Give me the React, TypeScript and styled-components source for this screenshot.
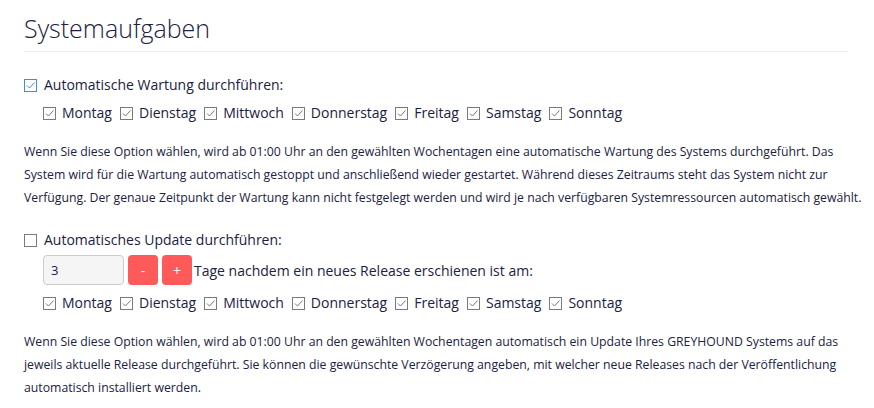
import React, {useState} from 'react'
import styled, {createGlobalStyle} from 'styled-components'

const days = ['Montag', 'Dienstag', 'Mittwoch', 'Donnerstag', 'Freitag', 'Samstag', 'Sonntag']

const Check = ({on, accent}: {on: boolean, accent?: boolean}) => (
    <Box $accent={accent}>
        {on ? (
            <svg width="11" height="11" viewBox="0 0 11 11">
                <path d="M2 5.5 L4.5 8 L9.5 2.5" fill="none" stroke={accent ? '#3d8fdc' : '#777'} strokeWidth="1" />
            </svg>
        ) : null}
    </Box>
)

const DayRow = () => (
    <Days>
        {days.map((d) => (
            <Day key={d}>
                <Check on={true} />
                <span>{d}</span>
            </Day>
        ))}
    </Days>
)

const App = () => {
    const [delay, setDelay] = useState<number>(3)

    return (
        <Container>
            <GlobalStyle />
            <Title>Systemaufgaben</Title>

            <Option $top={23}>
                <Check on={true} accent />
                <span>Automatische Wartung durchführen:</span>
            </Option>
            <DayRow />
            <Text>
                Wenn Sie diese Option wählen, wird ab 01:00 Uhr an den gewählten Wochentagen eine automatische Wartung des Systems durchgeführt. Das System wird für die Wartung automatisch gestoppt und anschließend wieder gestartet. Während dieses Zeitraums steht das System nicht zur Verfügung. Der genaue Zeitpunkt der Wartung kann nicht festgelegt werden und wird je nach verfügbaren Systemressourcen automatisch gewählt.
            </Text>

            <Option $top={21}>
                <Check on={false} />
                <span>Automatisches Update durchführen:</span>
            </Option>
            <Delay>
                <Input value={delay} readOnly />
                <Step onClick={() => setDelay(Math.max(0, delay - 1))}>-</Step>
                <Step onClick={() => setDelay(delay + 1)}>+</Step>
                <span>Tage nachdem ein neues Release erschienen ist am:</span>
            </Delay>
            <DayRow />
            <Text>
                Wenn Sie diese Option wählen, wird ab 01:00 Uhr an den gewählten Wochentagen automatisch ein Update Ihres GREYHOUND Systems auf das jeweils aktuelle Release durchgeführt. Sie können die gewünschte Verzögerung angeben, mit welcher neue Releases nach der Veröffentlichung automatisch installiert werden.
            </Text>
        </Container>
    )
}

export default App

const GlobalStyle = createGlobalStyle`
    body{
        margin: 0;
        background: #fff;
        font-family: "Open Sans", "Noto Sans", sans-serif;
        color: #1c2140;
    }
`

const Container = styled.div`
    width: 824px;
    padding: 0 24px;
`

const Title = styled.h1`
    margin: 0;
    padding-top: 11px;
    padding-bottom: 6px;
    font-size: 25px;
    font-weight: 300;
    line-height: 34px;
    border-bottom: 1px solid #eeeeee;
`

const Box = styled.span<{$accent?: boolean}>`
    width: 11px;
    height: 11px;
    border: 1px solid ${(p) => (p.$accent ? '#3d8fdc' : '#7a7a7a')};
    display: inline-flex;
    align-items: center;
    justify-content: center;
    flex-shrink: 0;
    svg{
        display: block;
    }
`

const Option = styled.label<{$top: number}>`
    display: flex;
    align-items: center;
    gap: 7px;
    font-size: 14px;
    line-height: 20px;
    margin-top: ${(p) => p.$top}px;
`

const Days = styled.div`
    display: flex;
    align-items: center;
    gap: 8px;
    padding-left: 19px;
    margin-top: 8px;
    font-size: 14px;
    line-height: 20px;
`

const Day = styled.label`
    display: flex;
    align-items: center;
    gap: 6px;
`

const Text = styled.p`
    margin: 17px -22px 0 0;
    font-size: 12.25px;
    line-height: 23px;
`

const Delay = styled.div`
    display: flex;
    align-items: center;
    gap: 4px;
    padding-left: 19px;
    margin-top: 5px;
    font-size: 14px;
    span{
        margin-left: -2px;
    }
`

const Input = styled.input`
    width: 81px;
    height: 30px;
    box-sizing: border-box;
    border: 1px solid #cccccc;
    border-radius: 4px;
    background: #f5f5f5;
    padding: 0 7px;
    font-family: inherit;
    font-size: 13px;
    color: #1c2140;
    outline: none;
`

const Step = styled.button`
    width: 30px;
    height: 30px;
    border: none;
    border-radius: 4px;
    background: #ff5a5a;
    color: #fff;
    font-family: inherit;
    font-size: 14px;
    cursor: pointer;
    padding: 0;
`
